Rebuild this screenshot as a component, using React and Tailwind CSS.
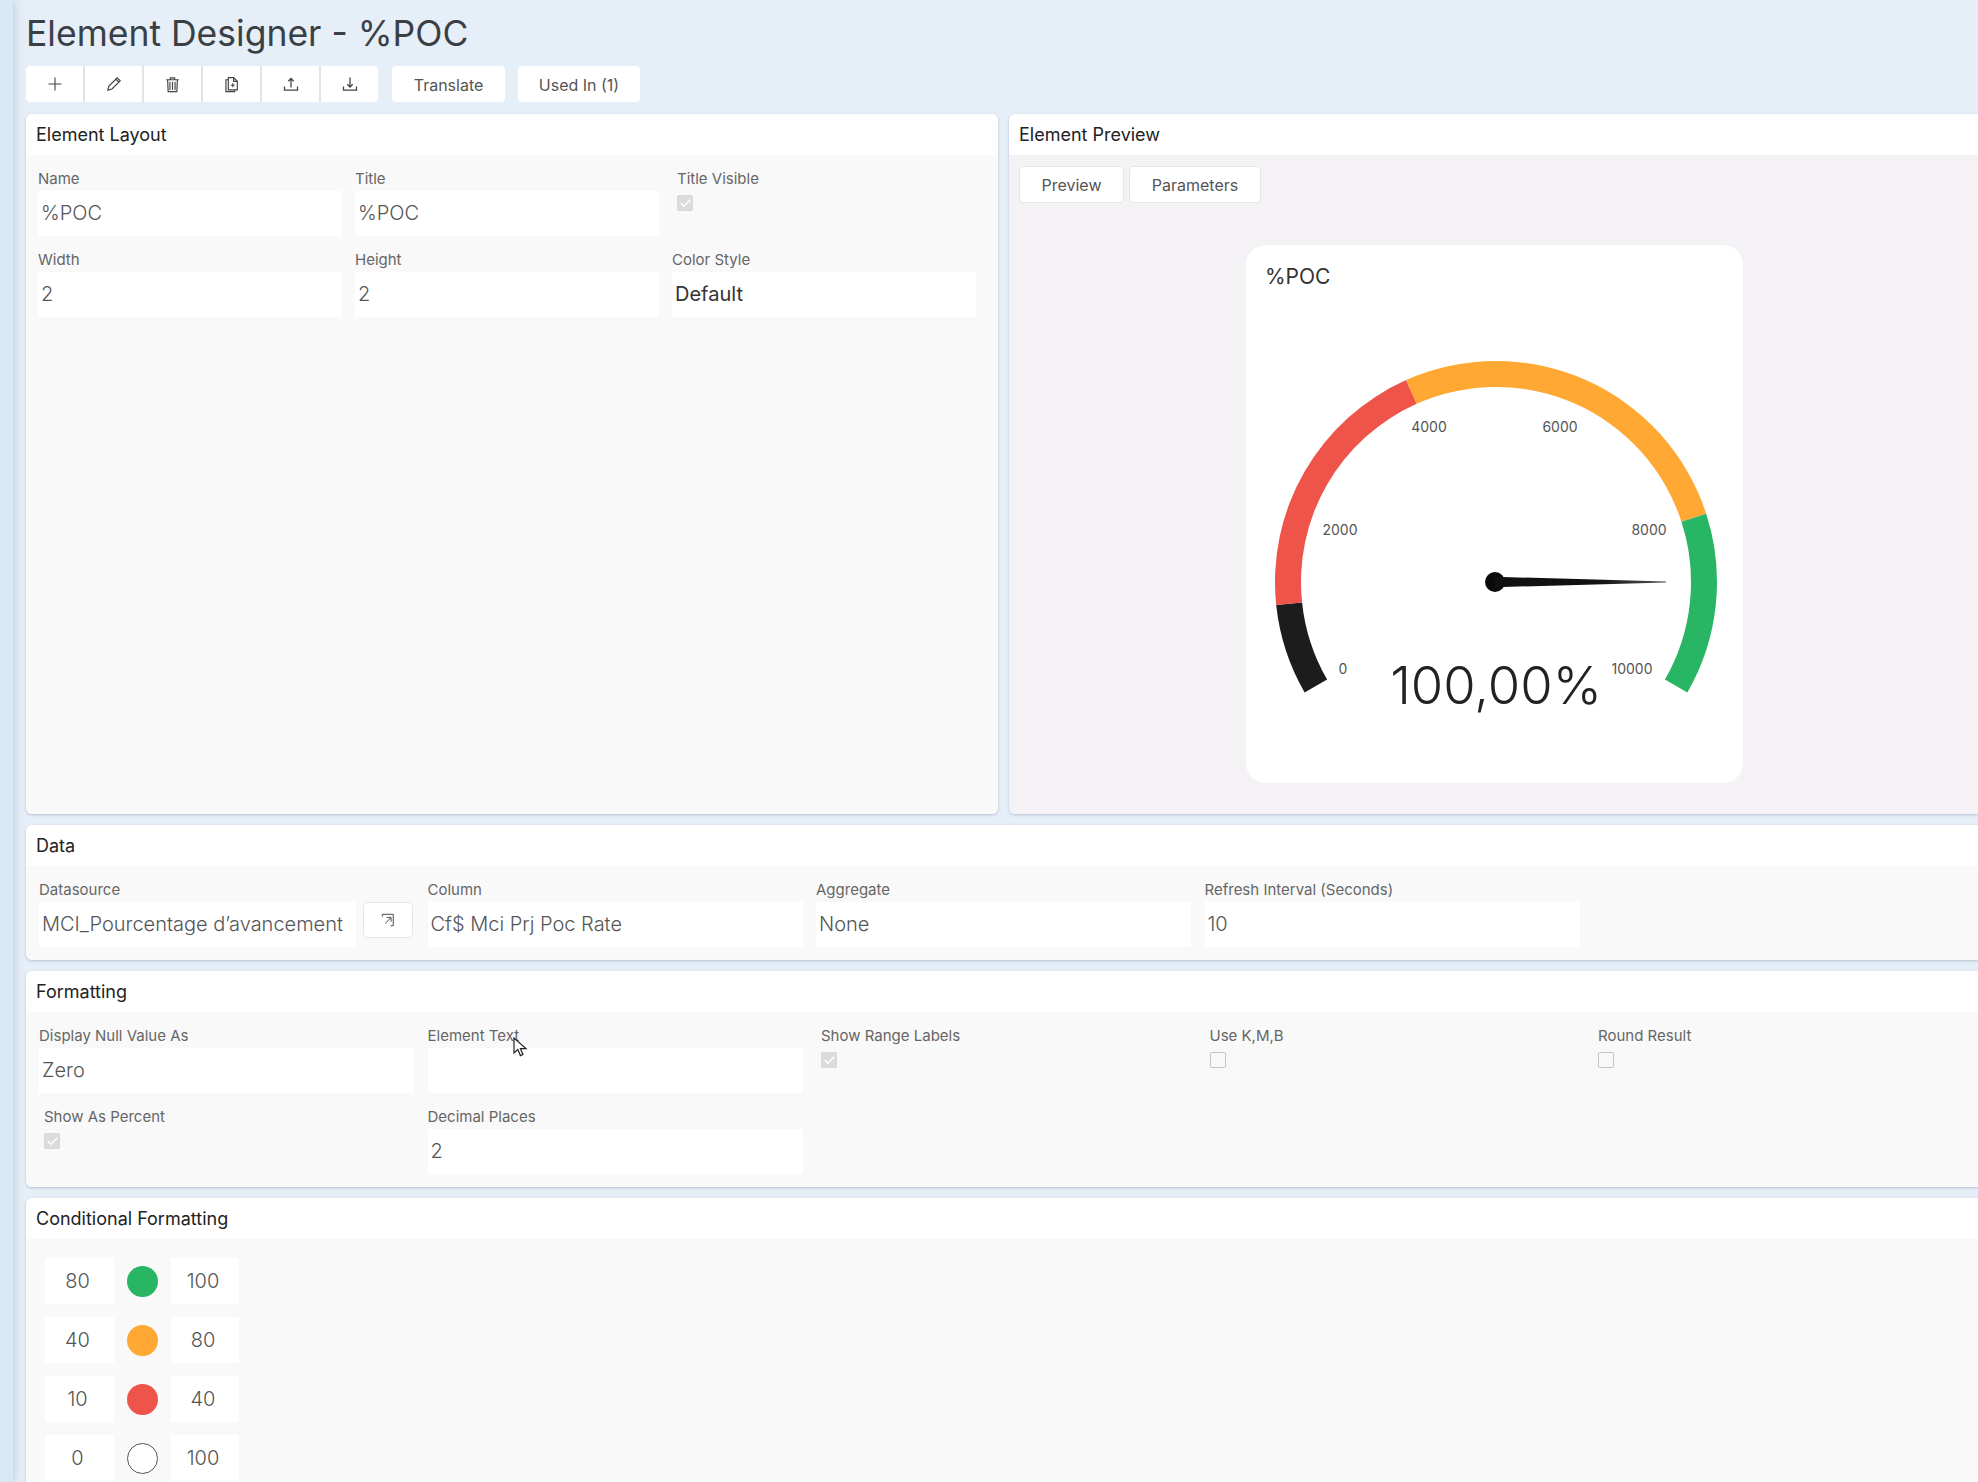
import { Check } from "lucide-react";

const font = { fontFamily: "Inter, 'Open Sans', sans-serif" };

function Icon({ children, w = 16, h = 16 }) {
  return (
    <svg width={w} height={h} viewBox="0 0 16 16" fill="none" stroke="currentColor" strokeWidth="1.1" className="block">
      {children}
    </svg>
  );
}

const tools = [
  <Icon key="add">
    <path d="M8 1.5v13M1.5 8h13" />
  </Icon>,
  <Icon key="edit" w={18} h={18}>
    <path d="M2.5 13.5l1-3.7 7.3-7.3 2.7 2.7-7.3 7.3-3.7 1zM9.6 3.7l2.7 2.7" />
  </Icon>,
  <Icon key="delete" w={17} h={17}>
    <path d="M2 3.5h12M6 3.5V1.8h4v1.7M3.4 3.5l.5 11.2h8.2l.5-11.2M5.6 5.5v7.6M8 5.5v7.6M10.4 5.5v7.6" />
  </Icon>,
  <Icon key="copy" w={17} h={17}>
    <path d="M5 1.5h5l3.5 3.5v8H5zM10 1.5V5h3.5M5 3.5H2.8v11.2h8.2V13M9.2 6.8v3.8M7.3 8.7h3.8" />
  </Icon>,
  <Icon key="upload">
    <path d="M1.5 10.5v3.7h13v-3.7M8 11.5V2.5M5.3 5.2L8 2.5l2.7 2.7" strokeWidth="1.3" />
  </Icon>,
  <Icon key="download">
    <path d="M1.5 10.5v3.7h13v-3.7M8 1.5v9.5M5.3 8.3L8 11l2.7-2.7" strokeWidth="1.3" />
  </Icon>,
];

function Label({ children }) {
  return <div className="h-[24px] text-[15px] leading-[24px] text-[#666]">{children}</div>;
}

function Input({ value, dark }) {
  return (
    <div className={`h-[45px] bg-white pl-[3px] text-[20px] leading-[45px] whitespace-nowrap ${dark ? "text-[#333] font-normal" : "text-[#555] font-light"}`}>
      {value}
    </div>
  );
}

function Field({ label, value, dark, children }) {
  return (
    <div className="relative">
      <Label>{label}</Label>
      <Input value={value} dark={dark} />
      {children}
    </div>
  );
}

function Box({ checked }) {
  return (
    <div className={`w-[16px] h-[16px] rounded-[2px] border flex items-center justify-center ${checked ? "bg-[#dcdcdc] border-[#d8d8d8]" : "bg-[#f9f9f9] border-[#c4c4c4]"}`}>
      {checked && <Check size={13} strokeWidth={3} className="text-white" />}
    </div>
  );
}

function CheckField({ label, checked, className = "" }) {
  return (
    <div className={className}>
      <Label>{label}</Label>
      <div className="mt-[4px]">
        <Box checked={checked} />
      </div>
    </div>
  );
}

function Panel({ title, className = "", bodyClass = "", children }) {
  return (
    <div className={`flex flex-col rounded-l-[6px] overflow-hidden shadow-[0_1px_3px_rgba(90,110,140,0.35)] ${className}`}>
      <div className="h-[41px] bg-white pl-[10px] text-[18px] leading-[41px] font-normal text-[#222] shrink-0">{title}</div>
      <div className={`flex-1 ${bodyClass}`}>{children}</div>
    </div>
  );
}

// gauge arcs, angles counted from the lower left end
const cx = 222;
const cy = 222;
function polar(r, a) {
  const t = ((210 - a) * Math.PI) / 180;
  return [cx + r * Math.cos(t), cy - r * Math.sin(t)];
}
function arc(from, to) {
  const [x1, y1] = polar(221, from);
  const [x2, y2] = polar(221, to);
  const [x3, y3] = polar(195, to);
  const [x4, y4] = polar(195, from);
  const big = to - from > 180 ? 1 : 0;
  return `M${x1} ${y1}A221 221 0 ${big} 1 ${x2} ${y2}L${x3} ${y3}A195 195 0 ${big} 0 ${x4} ${y4}Z`;
}

function Gauge() {
  const labels = [
    ["0", 69, 314],
    ["2000", 66, 175],
    ["4000", 155, 72],
    ["6000", 286, 72],
    ["8000", 375, 175],
    ["10000", 358, 314],
  ];
  return (
    <svg width="446" height="366" viewBox="0 0 446 366" className="block">
      <defs>
        <linearGradient id="needle" x1="0" x2="1" y1="0" y2="0">
          <stop offset="0.6" stopColor="#111" />
          <stop offset="1" stopColor="#555" />
        </linearGradient>
      </defs>
      <path d={arc(0, 24)} fill="#1c1c1c" />
      <path d={arc(24, 96)} fill="#ee5449" />
      <path d={arc(96, 192)} fill="#ffa833" />
      <path d={arc(192, 240)} fill="#28b665" />
      {labels.map(([t, x, y]) => (
        <text key={t} x={x} y={y} textAnchor="middle" fontSize="14" fill="#555" style={font}>{t}</text>
      ))}
      <circle cx="221" cy="222" r="10" fill="#0b0b0b" />
      <path d="M221 216.8L392 221.6V222.4L221 227.2Z" fill="url(#needle)" />
      <text x="222" y="344" textAnchor="middle" fontSize="52.5" fontWeight="300" fill="#222" style={font}>100,00%</text>
    </svg>
  );
}

function RangeRow({ from, to, color }) {
  return (
    <div className="flex items-center h-[46px]">
      <div className="w-[69px] h-[46px] bg-white pr-[4px] text-center text-[20px] leading-[46px] font-light text-[#555]">{from}</div>
      <div className={`ml-[13px] w-[31px] h-[31px] rounded-full ${color}`} />
      <div className="ml-[13px] w-[68px] h-[46px] bg-white pr-[4px] text-center text-[20px] leading-[46px] font-light text-[#555]">{to}</div>
    </div>
  );
}

export default function App() {
  return (
    <div className="flex w-[1978px] h-[1482px] overflow-hidden bg-[#e6eef8]" style={font}>
      <div className="w-[13px] shrink-0 bg-[#d6e9f5] shadow-[2px_0_8px_rgba(120,140,170,0.3)]" />
      <div className="flex-1 min-w-0 pl-[13px]">
        <h1 className="h-[66px] pt-[13px] text-[35.5px] leading-[42px] text-[#3a3f45] font-normal">Element Designer - %POC</h1>
        <div className="flex h-[36px] text-[#444]">
          <div className="flex gap-[2px] bg-[#dfe3e8] rounded-[4px] overflow-hidden">
            {tools.map((icon, i) => (
              <button key={i} className="w-[57px] bg-white flex items-center justify-center">
                {icon}
              </button>
            ))}
          </div>
          <button className="ml-[14px] w-[113px] pt-[2px] bg-white rounded-[4px] text-[16px] text-[#555]">Translate</button>
          <button className="ml-[13px] w-[122px] pt-[2px] bg-white rounded-[4px] text-[16px] text-[#555]">Used In (1)</button>
        </div>

        <div className="flex gap-[11px] mt-[12px] h-[700px]">
          <Panel title="Element Layout" className="w-[972px] shrink-0 rounded-r-[6px]" bodyClass="bg-[#f9f9f9] pt-[12px] pl-[12px]">
            <div className="grid grid-cols-[304px_304px_304px] gap-x-[13px] gap-y-[12px]">
              <Field label="Name" value="%POC" />
              <Field label="Title" value="%POC" />
              <CheckField label="Title Visible" checked className="pl-[5px]" />
              <Field label="Width" value="2" />
              <Field label="Height" value="2" />
              <Field label="Color Style" value="Default" dark />
            </div>
          </Panel>
          <Panel title="Element Preview" className="flex-1 min-w-0" bodyClass="bg-[#f4f2f5] pt-[11px] pl-[10px]">
            <div className="flex gap-[5px]">
              <button className="w-[105px] h-[37px] bg-white border border-[#e6e6e6] rounded-[4px] text-[16px] text-[#555]">Preview</button>
              <button className="w-[132px] h-[37px] bg-white border border-[#e6e6e6] rounded-[4px] text-[16px] text-[#555]">Parameters</button>
            </div>
            <div className="ml-[227px] mt-[42px] w-[497px] h-[538px] bg-white rounded-[20px] pt-[18px] pl-[19px]">
              <div className="text-[21px] leading-[28px] text-[#333]">%POC</div>
              <div className="ml-[8.5px] mt-[69px]">
                <Gauge />
              </div>
            </div>
          </Panel>
        </div>

        <Panel title="Data" className="mt-[11px] h-[135px]" bodyClass="bg-[#f9f9f9] pt-[12px] pl-[13px]">
          <div className="grid grid-cols-[375px_375px_375px_375px] gap-x-[13.5px]">
            <div className="flex flex-col">
              <Label>Datasource</Label>
              <div className="flex items-start gap-[7px]">
                <div className="w-[317px] shrink-0"><Input value="MCI_Pourcentage d’avancement" /></div>
                <button className="w-[50px] h-[36px] bg-white border border-[#e6e6e6] rounded-[4px] flex items-center justify-center text-[#444]">
                  <Icon w={14} h={14}>
                    <path d="M1.5 4V1.5h12.5v13h-3M5 12l6-6.5M6.5 5h5v5" />
                  </Icon>
                </button>
              </div>
            </div>
            <Field label="Column" value="Cf$ Mci Prj Poc Rate" />
            <Field label="Aggregate" value="None" />
            <Field label="Refresh Interval (Seconds)" value="10" />
          </div>
        </Panel>

        <Panel title="Formatting" className="mt-[11px] h-[216px]" bodyClass="bg-[#f9f9f9] pt-[12px] pl-[13px]">
          <div className="grid grid-cols-[375px_375px_375px_375px_375px] gap-x-[13.5px] gap-y-[12px]">
            <Field label="Display Null Value As" value="Zero" />
            <Field label="Element Text" value="">
              <svg width="15" height="20" viewBox="0 0 15 20" className="absolute left-[85px] top-[13px]">
                <path d="M1 1v15l3.8-3.4 2.6 6 2.6-1.1-2.6-5.9H13z" fill="#fff" stroke="#222" strokeWidth="1.2" />
              </svg>
            </Field>
            <CheckField label="Show Range Labels" checked className="pl-[5px]" />
            <CheckField label="Use K,M,B" className="pl-[5px]" />
            <CheckField label="Round Result" className="pl-[5px]" />
            <CheckField label="Show As Percent" checked className="pl-[5px]" />
            <Field label="Decimal Places" value="2" />
          </div>
        </Panel>

        <Panel title="Conditional Formatting" className="mt-[11px] h-[300px]" bodyClass="bg-[#f9f9f9] pt-[19px] pl-[19px]">
          <div className="flex flex-col gap-[13px]">
            <RangeRow from="80" to="100" color="bg-[#28b665]" />
            <RangeRow from="40" to="80" color="bg-[#ffa833]" />
            <RangeRow from="10" to="40" color="bg-[#ee5449]" />
            <RangeRow from="0" to="100" color="bg-white border border-[#555]" />
          </div>
        </Panel>
      </div>
    </div>
  );
}
